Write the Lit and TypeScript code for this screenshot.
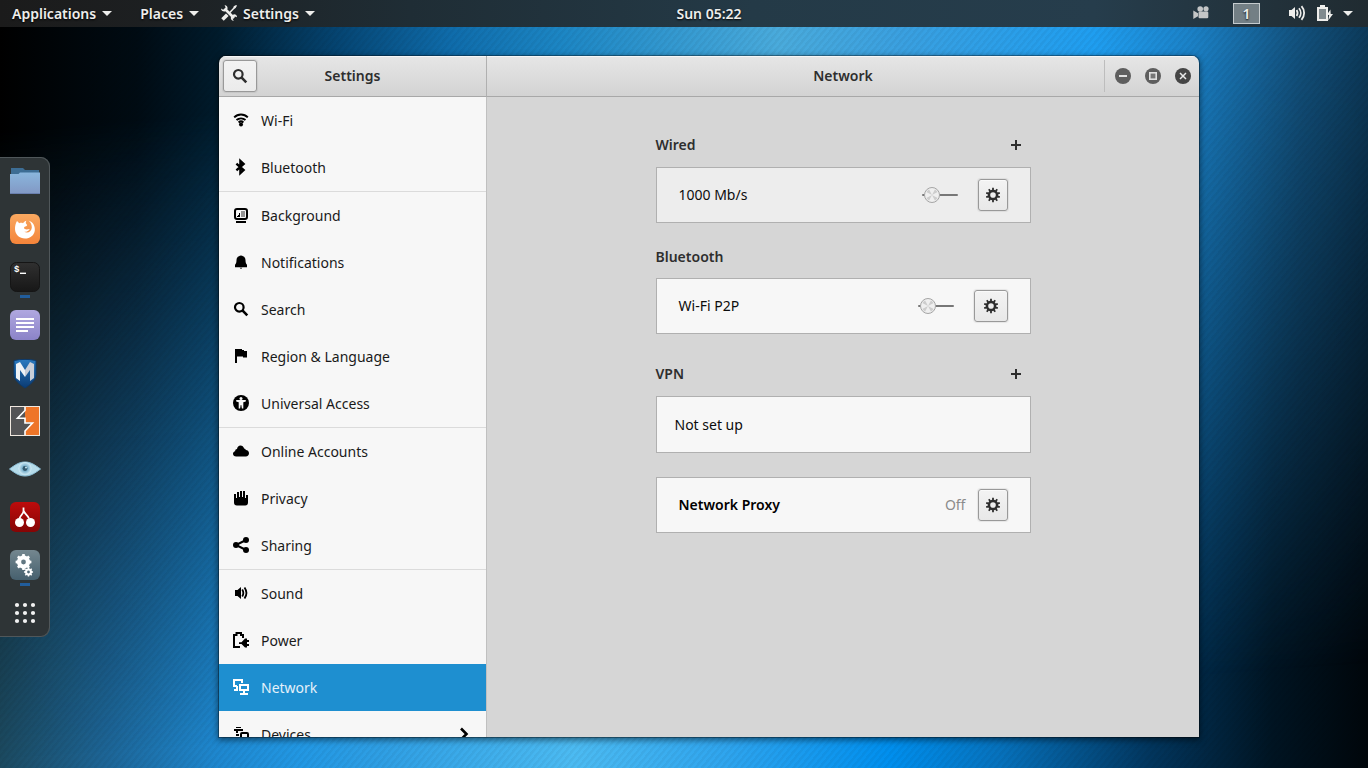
import { LitElement, html, svg, css, nothing, type TemplateResult, type SVGTemplateResult } from "lit";
import { customElement, property } from "lit/decorators.js";
import { classMap } from "lit/directives/class-map.js";

/** Builds one tooth-ringed gear outline with a round hole. */
function gearPath(cx: number, cy: number, teeth: number, outer: number, inner: number, hole: number): string {
  const step = (Math.PI * 2) / teeth;
  const pt = (r: number, a: number) => `${(cx + r * Math.sin(a)).toFixed(2)} ${(cy - r * Math.cos(a)).toFixed(2)}`;
  let d = "";
  for (let i = 0; i < teeth; i++) {
    const a = i * step;
    d += `${i ? "L" : "M"}${pt(inner, a - step * 0.27)}L${pt(outer, a - step * 0.2)}L${pt(outer, a + step * 0.2)}L${pt(inner, a + step * 0.27)}`;
  }
  return `${d}ZM${cx - hole} ${cy}a${hole} ${hole} 0 1 0 ${hole * 2} 0a${hole} ${hole} 0 1 0 ${-hole * 2} 0Z`;
}

const symbols: Record<string, SVGTemplateResult> = {
  wifi: svg`<g fill="none" stroke="currentColor" stroke-width="2"><path d="M1.200 5.400C5 1.600 11 1.600 14.800 5.400"/><path d="M3.500 8.100c2.600-2.300 6.400-2.300 9 0"/><path d="M5.600 10.400c1.400-1.200 3.400-1.200 4.800 0"/></g><circle cx="8" cy="12.600" r="2"/>`,
  bluetooth: svg`<path fill="none" stroke="currentColor" stroke-width="2.400" d="M3.400 4.700l7.200 6.300L7.400 14V2l3.200 3-7.200 6.300"/>`,
  background: svg`<rect x="2" y="2" width="12" height="10" rx="2" fill="none" stroke="currentColor" stroke-width="2"/><path d="M8 4h4v6H8z" fill-opacity=".4"/><path d="M3 14h10v2H3zM4 10V9h1V8h1V6h1v4z"/>`,
  bell: svg`<path d="M8 1.400c.9 0 1.500.3 2 .9 1.700.6 2.400 2 2.500 4 .1 2.600.5 3.500 1.500 4.400v2.500H2v-2.500c1-.9 1.400-1.800 1.500-4.400.1-2 .8-3.400 2.500-4 .5-.6 1.100-.9 2-.9z"/><path d="M6.700 13.800h2.600L8 15z"/>`,
  search: svg`<circle cx="6.300" cy="6.300" r="4.300" fill="none" stroke="currentColor" stroke-width="2.200"/><path stroke="currentColor" stroke-width="2.600" d="M9.400 9.400l4.900 4.900"/>`,
  flag: svg`<path d="M2 1h7v1h2v1h3v6.500h-4V8.500H4V15H2z"/>`,
  access: svg`<circle cx="8" cy="8" r="8"/><g fill="#f7f7f7"><circle cx="8" cy="3.600" r="1.500"/><path d="M3.200 5h9.600v1.400L10.300 7.200v6.200H8.900L8.300 10h-.6l-.6 3.400H5.700V7.200l-2.500-.8z"/></g>`,
  cloud: svg`<path d="M3.200 13.500C1.200 13.500 0 12.300 0 10.800 0 9.500.9 8.600 2.100 8.300 2.200 6.900 3 6.200 4 6.100 4.400 3.800 5.700 2.600 7.400 2.600c1.900 0 3.100 1.100 3.700 2.900 1 .1 1.600.7 1.700 1.500 2 .2 3.200 1.500 3.200 3.300 0 1.900-1.300 3.200-3.200 3.200z"/>`,
  hand: svg`<path d="M1 4h2v4h1V2h2v5h1V1h2v6h1V1h2v7h1V5h2v7.500c0 1.900-1 3-2.700 3H3.900C2 15.500 1 14.300 1 12.500z"/>`,
  share: svg`<path fill="none" stroke="currentColor" stroke-width="2" d="M13 3L3 8l10 5"/><circle cx="3" cy="8" r="3"/><circle cx="13" cy="3" r="3"/><circle cx="13" cy="13" r="3"/>`,
  sound: svg`<path d="M2 5h2.500L8 2v12l-3.500-3H2z"/><path fill="none" stroke="currentColor" stroke-width="1.800" d="M9.200 4.500c1.300 2 1.300 5 0 7M11.500 2.500c2.500 3.500 2.500 7.500 0 11"/>`,
  power: svg`<path fill="none" stroke="currentColor" stroke-width="2" d="M7 15H1V3h2.500V1H8v2h2v3"/><path d="M6 10.300h2.500L12 6.500h2V8h2v2h-2v2h2v2h-2v1.500h-2l-3.500-3.400H6z"/>`,
  network: svg`<path fill="none" stroke="currentColor" stroke-width="2" d="M4 7H1V1h8v3M1 11h4M7 6h8v5H7z"/><path d="M3 7h2v4H3zM10 12h2v2h3v2H7v-2h3z"/>`,
  devices: svg`<path d="M3 1h5v1H3zM1 3h9v2H1zM3 5h2v2H3zM3 8h3v2H3z"/><rect x="8" y="7" width="7" height="7" rx="1" fill="none" stroke="currentColor" stroke-width="2"/>`,
  plus: svg`<path d="M7 3h2v4h4v2H9v4H7V9H3V7h4z"/>`,
  gear: svg`<path fill-rule="evenodd" d=${gearPath(8, 8, 10, 7.2, 5.3, 2.8)}/>`,
  chevron: svg`<path fill="none" stroke="currentColor" stroke-width="2.600" d="M5 2.500L10.500 8 5 13.500"/>`,
  minimize: svg`<circle cx="8" cy="8" r="8"/><path fill="#e0e0e0" d="M4 7h8v2H4z"/>`,
  maximize: svg`<circle cx="8" cy="8" r="8"/><rect x="4.800" y="4.800" width="6.400" height="6.400" fill="#777" stroke="#e0e0e0" stroke-width="1.600"/>`,
  close: svg`<circle cx="8" cy="8" r="8"/><path stroke="#e8e8e8" stroke-width="1.500" d="M5 5l6 6M11 5l-6 6"/>`,
  tools: svg`<path fill="none" stroke="currentColor" stroke-width="2.600" d="M4.500 4.500l8.500 8.500"/><path d="M3.600 0C5.600.2 7 2 6.500 4L4.100 6.400C2 6.800 0 5.400 0 3.400l2.200 1.400L4.600 2.600zM16 12.300c.1-2-1.700-3.300-3.500-2.900l-2.600 2.700c-.5 2 .9 3.800 2.900 3.900l-1.200-2.200 2.300-2.200z"/><path fill="none" stroke="currentColor" stroke-width="1.500" d="M14.800 1.200L8.300 8"/><path fill="none" stroke="currentColor" stroke-width="3.600" d="M6.300 9.800L1.500 14.600"/><path d="M16 .8l-.8-.8-2.500 1.200-.2 1.800 1.500.4z"/>`,
  camera: svg`<circle cx="7.200" cy="4" r="2.800"/><circle cx="13" cy="3.800" r="2.600"/><rect x="5.500" y="6.500" width="9.800" height="6.800" rx="1.200"/><path d="M.3 5.500L5 8.300v3L.3 14z"/>`,
  volume: svg`<path d="M0 5h2.500L6 2v12l-3.500-3H0z"/><path fill="none" stroke="currentColor" stroke-width="1.800" d="M7.600 5c1.200 1.800 1.200 4.200 0 6M10 3.200c2.300 2.800 2.300 6.800 0 9.600M12.500 1.200c3.500 4 3.500 9.600 0 13.600"/>`,
  battery: svg`<rect x="2" y="3" width="9" height="12" fill="#808a8e" stroke="currentColor" stroke-width="2"/><path d="M4 0h5v2.500H4z"/><path d="M14.400 4.500L10.800 10h2.400l-1 5.500L17 9h-2.300z"/>`,
};

/** Full-colour 30px launcher pictures. */
const launchers: Record<string, SVGTemplateResult> = {
  files: svg`<defs><linearGradient id="a" x2="0" y2="1"><stop stop-color="#8ab6dd"/><stop offset="1" stop-color="#8298c4"/></linearGradient></defs><path fill="#3d6d94" d="M1 2h12l2 2h14v6H1z"/><path fill="url(#a)" d="M0 8h8.500l1.500-1.500h20V28H0z"/><path fill="#6a7fae" d="M0 27h30v1H0z"/>`,
  firefox: svg`<defs><linearGradient id="b" x2="0" y2="1"><stop stop-color="#f9a860"/><stop offset="1" stop-color="#f4843a"/></linearGradient></defs><rect width="30" height="30" rx="6" fill="url(#b)"/><path fill="#fff" d="M7 7l2.300 2.200c1.300-.5 2.600-.4 3.700 0 1.200-1.600 2.200-2.200 3.400-2.500-.6 1-.7 2-.4 2.800l1.200 1.400c-.3 1.200-1.500 1.300-2.900 2-.4.9-.1 1.500.6 2.200 1.800.6 3 .1 4.800-.1-.7 2-2.800 2.900-5.400 2.800 3.300 2 7-.2 7.500-4 .2-3-1-5.200-3.300-7.300 4.500 1.500 6.800 5.400 6.300 10-.6 4.800-4.700 8-9.800 8.100C9.500 24.500 5.300 20.800 5 15.300c-.1-3.300.7-6 2-8.300z"/>`,
  terminal: svg`<defs><linearGradient id="c" x2="0" y2="1"><stop stop-color="#303030"/><stop offset="1" stop-color="#171717"/></linearGradient></defs><rect x=".5" y=".5" width="29" height="29" rx="6" fill="url(#c)" stroke="#151515"/><text x="4" y="10" fill="#fff" font-family="Liberation Mono, monospace" font-weight="700" font-size="9">$</text><path fill="#fff" d="M10 10.600h6v1.400h-6z"/>`,
  notes: svg`<defs><linearGradient id="d" x2="0" y2="1"><stop stop-color="#b0a8e0"/><stop offset="1" stop-color="#8b83c8"/></linearGradient></defs><rect width="30" height="30" rx="6" fill="url(#d)"/><path fill="#fff" d="M6 8h18v2H6zM6 12h18v2H6zM6 16h18v2H6zM6 20h12v2H6z"/>`,
  metasploit: svg`<defs><linearGradient id="e" x2="0" y2="1"><stop stop-color="#2a7ac0"/><stop offset="1" stop-color="#0b3b73"/></linearGradient></defs><path fill="url(#e)" stroke="#0d3a6b" d="M4 2.500c7-1.500 15-1.500 22 0v14C26 22 21 26 15 30 9 26 4 22 4 16.500z"/><path fill="#eef2f6" d="M6 6l4-2 5 8v7l-5-7v11l-4-3z"/><path fill="#c9ced8" d="M24 6l-4-2-5 8v7l5-7v11l4-3z"/>`,
  burp: svg`<rect x="1" y="1" width="28" height="28" fill="#545456"/><path fill="#ee7528" d="M15 1h14v28H15v-3.500l7-9h-7V1z"/><path fill="#545456" d="M13 1h2v10L8 12z"/><path fill="none" stroke="#fff" stroke-width="1.600" d="M15 0v4.500L7.500 12.200H15V17h7.500L15 25v5"/><rect x=".5" y=".5" width="29" height="29" fill="none" stroke="#f0e8e0"/>`,
  eye: svg`<defs><radialGradient id="f"><stop stop-color="#4d7d96"/><stop offset=".45" stop-color="#7fb4cf"/><stop offset="1" stop-color="#d3ecf6"/></radialGradient></defs><path fill="#b5dbea" stroke="#8dc0d8" d="M-.5 15C5 11 9 8 15 8s10 3 15.500 7C25 19 21 22 15 22S5 19-.5 15z"/><circle cx="15" cy="14.500" r="6.500" fill="url(#f)"/><circle cx="15" cy="14.500" r="2.400" fill="#33596e"/><circle cx="16" cy="13.500" r="1" fill="#c8e6f2"/>`,
  cherry: svg`<defs><linearGradient id="g" x2="0" y2="1"><stop stop-color="#bd0c0c"/><stop offset="1" stop-color="#850505"/></linearGradient></defs><rect width="30" height="30" rx="6" fill="url(#g)"/><circle cx="9.500" cy="20.500" r="4.500" fill="#fff"/><circle cx="20.500" cy="20.500" r="4.500" fill="#fff"/><path fill="none" stroke="#fff" stroke-width="1.800" d="M13.500 5.500V9c0 3-3 4-4 7.500M13.500 8.500c1 3.500 4 4 5.500 8"/>`,
  settings: svg`<defs><linearGradient id="h" x2="0" y2="1"><stop stop-color="#74878f"/><stop offset="1" stop-color="#46606e"/></linearGradient></defs><rect width="30" height="30" rx="6" fill="url(#h)"/><path fill="#fff" fill-rule="evenodd" d=${gearPath(13.5, 12, 8, 8, 6.6, 2.4)}/><path fill="#fff" fill-rule="evenodd" d=${gearPath(18.5, 22, 8, 4.6, 3.6, 1.4)}/>`,
  apps: svg`<g fill="#f2f2f2">${[7, 15, 23].map((y) => [7, 15, 23].map((x) => svg`<circle cx=${x} cy=${y} r="2.100"/>`))}</g>`,
};

@customElement("ui-icon")
class UiIcon extends LitElement {
  @property() name = "";
  static styles = css`
    :host { display: block; flex: none; width: 16px; height: 16px; }
    .glyph { display: block; width: 100%; height: 100%; fill: currentColor; overflow: visible; }
  `;
  render() {
    return html`<svg class="glyph" viewBox="0 0 16 16" aria-hidden="true">${symbols[this.name]}</svg>`;
  }
}

interface PanelItem {
  icon: string;
  label: string;
  endsGroup?: boolean;
  submenu?: boolean;
  current?: boolean;
}

const panels: PanelItem[] = [
  { icon: "wifi", label: "Wi-Fi" },
  { icon: "bluetooth", label: "Bluetooth", endsGroup: true },
  { icon: "background", label: "Background" },
  { icon: "bell", label: "Notifications" },
  { icon: "search", label: "Search" },
  { icon: "flag", label: "Region & Language" },
  { icon: "access", label: "Universal Access", endsGroup: true },
  { icon: "cloud", label: "Online Accounts" },
  { icon: "hand", label: "Privacy" },
  { icon: "share", label: "Sharing", endsGroup: true },
  { icon: "sound", label: "Sound" },
  { icon: "power", label: "Power" },
  { icon: "network", label: "Network", current: true },
  { icon: "devices", label: "Devices", submenu: true },
];

const dockItems = [
  { icon: "files", label: "Files" },
  { icon: "firefox", label: "Firefox" },
  { icon: "terminal", label: "Terminal", running: true },
  { icon: "notes", label: "Notes" },
  { icon: "metasploit", label: "Metasploit" },
  { icon: "burp", label: "Burp Suite" },
  { icon: "eye", label: "Zenmap" },
  { icon: "cherry", label: "CherryTree" },
  { icon: "settings", label: "Settings", running: true },
  { icon: "apps", label: "Show Applications" },
];

const fontStack = css`"Noto Sans", "Open Sans", sans-serif`;

@customElement("top-bar")
class TopBar extends LitElement {
  static styles = css`
    :host { display: block; }
    .bar {
      display: grid; grid-template-columns: 1fr auto 1fr; align-items: center;
      height: 27px; padding-left: 50px;
      background: linear-gradient(90deg, #1b1b1b, #1d2022 12%, #1f2d35 30%, #243a47 55%, #263d4c 80%, #202b31);
      color: #eeeeec; font: 600 14px/20px ${fontStack};
      text-shadow: 0 1px 2px #000;
    }
    .menus { display: flex; gap: 22px; margin-left: -38px; }
    .menu, .clock, .tray, .workspace {
      display: flex; align-items: center; padding: 0; border: 0;
      background: none; color: inherit; font: inherit; text-shadow: inherit;
    }
    .menu { gap: 6px; }
    .menu.first { margin-right: 6px; }
    .icon { margin-bottom: 1px; }
    .caret { width: 0; border: 5px solid transparent; border-top-color: currentColor; border-bottom: 0; }
    .status { display: flex; align-items: center; justify-content: flex-end; gap: 24px; padding-right: 15px; }
    .camera { color: #c4c6c7; }
    .workspace {
      justify-content: center; box-sizing: border-box; width: 27px; height: 21px;
      border: 1px solid #c5cbce; background: #737f85;
    }
    .tray { gap: 11px; margin-left: 5px; }
  `;
  render() {
    return html`<header class="bar">
      <nav class="menus" aria-label="Desktop">
        <button class="menu first">Applications<span class="caret"></span></button>
        <button class="menu">Places<span class="caret"></span></button>
        <button class="menu"><ui-icon class="icon" name="tools"></ui-icon>Settings<span class="caret"></span></button>
      </nav>
      <button class="clock">Sun 05:22</button>
      <div class="status">
        <ui-icon class="icon camera" name="camera"></ui-icon>
        <button class="workspace" aria-label="Workspace 1">1</button>
        <button class="tray" aria-label="System menu">
          <ui-icon class="icon" name="volume"></ui-icon><ui-icon class="icon" name="battery"></ui-icon><span class="caret"></span>
        </button>
      </div>
    </header>`;
  }
}

@customElement("app-dock")
class AppDock extends LitElement {
  static styles = css`
    :host { display: block; }
    .dock {
      display: flex; flex-direction: column; box-sizing: border-box; width: 50px;
      border-right: 1px solid #50575a; border-radius: 0 9px 9px 0;
      background: #2e3436; box-shadow: inset 0 1px #50575a, inset 0 -1px #50575a;
    }
    .launcher {
      position: relative; display: grid; place-items: center; height: 48px;
      padding: 0; border: 0; background: none;
    }
    .art { width: 30px; height: 30px; margin-left: 1px; overflow: visible; }
    .running::after {
      content: ""; position: absolute; left: 20px; bottom: 3px;
      width: 10px; height: 3px; background: #215d9c;
    }
  `;
  render() {
    return html`<nav class="dock" aria-label="Dock">
      ${dockItems.map((d) => html`<button class=${classMap({ launcher: true, running: !!d.running })} aria-label=${d.label}>
        <svg class="art" viewBox="0 0 30 30" aria-hidden="true">${launchers[d.icon]}</svg>
      </button>`)}
    </nav>`;
  }
}

@customElement("panel-list")
class PanelList extends LitElement {
  static styles = css`
    :host { display: block; min-height: 0; overflow: hidden; background: #f7f7f7; }
    .entry {
      display: flex; align-items: center; gap: 12px; height: 47px; padding: 0 14px;
      color: #1a1a1a; font: 14px/20px ${fontStack}; text-decoration: none;
    }
    .icon { margin-bottom: 1px; color: #000; }
    .label { flex: 1; }
    .ends-group { border-bottom: 1px solid #dbdbdb; }
    .current { background: #1e8fd0; }
    .current .icon { color: #fff; }
    .current .label { color: #e4f1fa; }
    .list { margin: 0; padding: 0; list-style: none; }
  `;
  render() {
    return html`<ul class="list">
      ${panels.map((p) => html`<li>
        <a href="#" class=${classMap({ entry: true, "ends-group": !!p.endsGroup, current: !!p.current })}
          aria-current=${p.current ? "page" : nothing}>
          <ui-icon class="icon" name=${p.icon}></ui-icon><span class="label">${p.label}</span>
          ${p.submenu ? html`<ui-icon class="icon" name="chevron"></ui-icon>` : nothing}
        </a>
      </li>`)}
    </ul>`;
  }
}

@customElement("network-panel")
class NetworkPanel extends LitElement {
  static styles = css`
    :host { display: block; background: #d6d6d6; color: #2e2e2e; font: 14px/20px ${fontStack}; }
    .column { display: flex; flex-direction: column; max-width: 375px; margin: 26px auto; }
    .heading { display: flex; align-items: center; justify-content: space-between; height: 42px; padding-right: 7px; }
    .heading.wide { height: 44px; }
    .title { margin: 0; font-size: 14px; font-weight: 600; line-height: 20px; }
    .section + .section { margin-top: 13px; }
    .section + .section.spaced { margin-top: 18px; }
    .section + .section.untitled { margin-top: 24px; }
    .add { padding: 0; border: 0; background: none; color: #2e2e2e; }
    .card {
      display: flex; align-items: center; box-sizing: border-box; min-height: 56px; padding: 0 22px;
      border: 1px solid #b0b0b0; background: #f7f7f7; color: #0c0c0c;
    }
    .card.dim { background: #ededed; }
    .card.empty { min-height: 57px; padding: 0 18px; }
    .name { flex: 1; }
    .strong { font-weight: 600; color: #000; }
    .state { margin-right: 12px; color: #8b8b8b; }
    .toggle { position: relative; display: block; width: 36px; height: 16px; margin-right: 20px; }
    .check { position: absolute; inset: 0; width: 100%; height: 100%; margin: 0; opacity: 0; }
    .track { display: block; }
    .options {
      display: grid; place-items: center; box-sizing: border-box; width: 30px; height: 32px; padding: 0;
      border: 1px solid #999; border-radius: 3px; color: #2e2e2e;
      background: linear-gradient(#f3f3f3, #e8e8e8); box-shadow: 0 0 1px 1px #00000012, inset 0 1px #fafafa;
    }
    .options.roomy { width: 34px; }
  `;

  private toggle(label: string) {
    return html`<label class="toggle">
      <input class="check" type="checkbox" role="switch" aria-label=${label} />
      <svg class="track" width="36" height="16" viewBox="0 0 36 16" aria-hidden="true">
        <path d="M1 8h34" stroke="#777" stroke-width="2" stroke-linecap="round"/>
        <circle cx="10" cy="8" r="7.500" fill="#efefef" stroke="#a5a5a5"/>
        <path fill="#cdcdcd" d="M10 8L4.300 5 7 2.300zM10 8l3-5.700L15.700 5zM10 8l5.700 3L13 13.700zM10 8l-3 5.700L4.300 11z"/>
      </svg>
    </label>`;
  }

  private options(label: string, roomy = false) {
    return html`<button class=${classMap({ options: true, roomy })} aria-label="${label} options"><ui-icon name="gear"></ui-icon></button>`;
  }

  private heading(label: string, canAdd: boolean): TemplateResult {
    return html`<div class=${classMap({ heading: true, wide: canAdd })}>
      <h2 class="title">${label}</h2>
      ${canAdd ? html`<button class="add" aria-label="Add ${label} connection"><ui-icon name="plus"></ui-icon></button>` : nothing}
    </div>`;
  }

  render() {
    return html`<div class="column">
      <section class="section">
        ${this.heading("Wired", true)}
        <div class="card dim"><span class="name">1000 Mb/s</span>${this.toggle("Wired")}${this.options("Wired")}</div>
      </section>
      <section class="section">
        ${this.heading("Bluetooth", false)}
        <div class="card"><span class="name">Wi-Fi P2P</span>${this.toggle("Wi-Fi P2P")}${this.options("Wi-Fi P2P", true)}</div>
      </section>
      <section class="section spaced">
        ${this.heading("VPN", true)}
        <div class="card empty"><span class="name">Not set up</span></div>
      </section>
      <section class="section untitled">
        <div class="card"><span class="name strong">Network Proxy</span><span class="state">Off</span>${this.options("Network Proxy")}</div>
      </section>
    </div>`;
  }
}

@customElement("settings-window")
class SettingsWindow extends LitElement {
  static styles = css`
    :host { display: block; min-width: 0; }
    .window {
      display: grid; grid-template-columns: 268px 1fr; grid-template-rows: 41px 1fr;
      height: 100%; overflow: hidden; border-radius: 7px 7px 0 0;
      font: 14px/20px ${fontStack}; color: #2e2e2e;
    }
    .head {
      display: grid; grid-template-columns: 1fr auto 1fr; align-items: center; box-sizing: border-box;
      padding: 0 4px; border-bottom: 1px solid #a8a8a8;
      background: linear-gradient(#e6e6e6, #d3d3d3); box-shadow: inset 0 1px #f6f6f6;
    }
    .left { border-right: 1px solid #b0b0b0; }
    .title { grid-column: 2; margin: 0; font-size: 14px; line-height: 20px; font-weight: 600; }
    .find {
      display: grid; place-items: center; box-sizing: border-box; width: 34px; height: 32px; padding: 0;
      border: 1px solid #999; border-radius: 3px; color: #2e2e2e;
      background: linear-gradient(#f3f3f3, #ebebeb); box-shadow: 0 0 1px 1px #00000012;
    }
    .controls {
      display: flex; align-items: center; justify-self: end; gap: 14px; height: 32px;
      padding: 0 4px 0 10px; border-left: 1px solid #bdbdbd;
    }
    .control { padding: 0; border: 0; background: none; color: #5e5e5e; }
    .control.close { color: #454545; }
    .side { border-right: 1px solid #c0c0c0; }
  `;
  render() {
    return html`<main class="window">
      <header class="head left">
        <button class="find" aria-label="Search settings"><ui-icon name="search"></ui-icon></button>
        <h1 class="title">Settings</h1>
      </header>
      <header class="head">
        <h1 class="title">Network</h1>
        <div class="controls">
          <button class="control" aria-label="Minimize"><ui-icon name="minimize"></ui-icon></button>
          <button class="control" aria-label="Maximize"><ui-icon name="maximize"></ui-icon></button>
          <button class="control close" aria-label="Close"><ui-icon name="close"></ui-icon></button>
        </div>
      </header>
      <panel-list class="side"></panel-list>
      <network-panel></network-panel>
    </main>`;
  }
}

@customElement("app-root")
class AppRoot extends LitElement {
  static styles = css`
    :host { display: block; }
    .desktop {
      position: relative; isolation: isolate; display: flex; flex-direction: column; height: 100vh; overflow: hidden;
      background: linear-gradient(90deg, #1c4a60, #1d6698 8%, #1e88d0 16%, #2298e4 22%, #2f9fe4 28%, #4cbbf2 42%, #2fa5ee 53%, #008fee 65%, #0672bd 73%, #02365e 84%, #001422 93%, #00060b);
    }
    .desktop::before, .desktop::after { content: ""; position: absolute; inset: 0; z-index: -1; }
    .desktop::before {
      background: linear-gradient(90deg, #000, #000b13 10%, #001b2c 16%, #054674 25%, #0f6cab 33%, #1c86c4 41%, #4aabdc 57%, #3aa0e0 66%, #1f9ef0 80%, #1b82c8 87%, #12517d 95%, #0c3a5a);
      -webkit-mask-image: linear-gradient(176deg, #000 15%, transparent 88%);
      mask-image: linear-gradient(176deg, #000 15%, transparent 88%);
    }
    .desktop::after { background: repeating-linear-gradient(130deg, #0000000b 0 2px, transparent 3px 5px); }
    .workarea { display: flex; flex: 1; align-items: center; min-height: 0; padding-bottom: 1px; }
    .stage { display: flex; flex: 1; justify-content: center; align-self: stretch; min-width: 0; padding: 29px 24px 30px; }
    .front { flex: 0 1 980px; border-radius: 7px 7px 0 0; box-shadow: 0 0 0 1px #0000004d, 0 2px 6px 1px #00000080; }
  `;
  render() {
    return html`<div class="desktop">
      <top-bar></top-bar>
      <div class="workarea">
        <app-dock></app-dock>
        <div class="stage"><settings-window class="front"></settings-window></div>
      </div>
    </div>`;
  }
}
